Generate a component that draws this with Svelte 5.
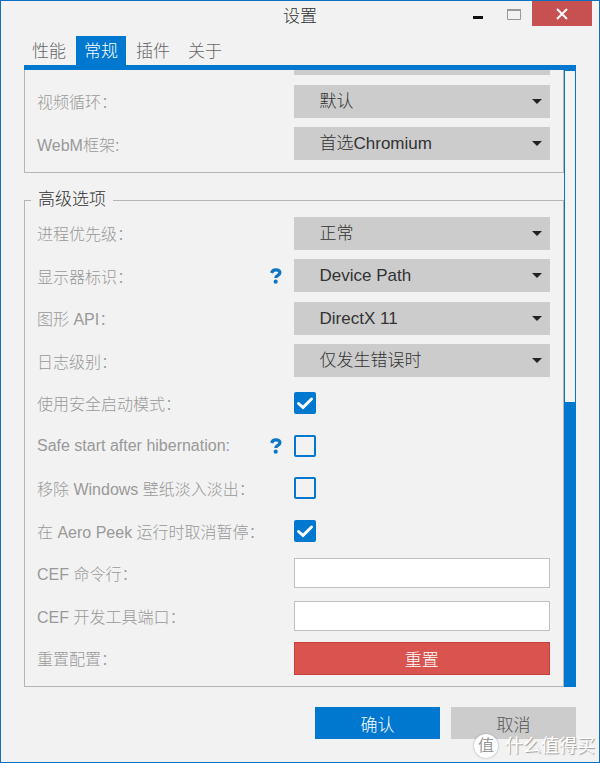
<script>
	let tabs = ['性能', '常规', '插件', '关于'];
	let activeTab = '常规';

	// General group, scrolled down so its first row is cut off
	let generalRows = [
		{ id: 'first', label: '', type: 'select', value: '' },
		{ id: 'video-loop', label: '视频循环：', type: 'select', value: '默认' },
		{ id: 'webm', label: 'WebM框架:', type: 'select', value: '首选Chromium' }
	];

	let advancedRows = [
		{ id: 'priority', label: '进程优先级：', type: 'select', value: '正常' },
		{ id: 'monitor', label: '显示器标识：', type: 'select', value: 'Device Path', help: true },
		{ id: 'graphics', label: '图形 API：', type: 'select', value: 'DirectX 11' },
		{ id: 'log', label: '日志级别：', type: 'select', value: '仅发生错误时' },
		{ id: 'safe-mode', label: '使用安全启动模式：', type: 'check', value: true },
		{ id: 'hibernation', label: 'Safe start after hibernation:', type: 'check', value: false, help: true },
		{ id: 'fade', label: '移除 Windows 壁纸淡入淡出：', type: 'check', value: false },
		{ id: 'peek', label: '在 Aero Peek 运行时取消暂停：', type: 'check', value: true },
		{ id: 'cef-cmd', label: 'CEF 命令行：', type: 'text', value: '' },
		{ id: 'cef-port', label: 'CEF 开发工具端口：', type: 'text', value: '' },
		{ id: 'reset', label: '重置配置：', type: 'reset', value: '重置' }
	];
</script>

{#snippet settingRow(row)}
	<div class="row">
		<label class="name" for={row.id}>{row.label}</label>
		{#if row.help}
			<button class="help" aria-label="Help">
				<svg width="12" height="16" viewBox="0 0 12 16">
					<path d="M1.600 5C2.200 2.700 3.700 1.900 5.800 1.900c2.500 0 4.100 1.100 4.100 2.900 0 2.700-4.100 2.400-4.100 5.200" fill="none" stroke="#0f76c4" stroke-width="3.200" />
					<circle cx="5.700" cy="13.700" r="2.100" fill="#0f76c4" />
				</svg>
			</button>
		{/if}
		<div class="control">
			{#if row.type === 'select'}
				<select id={row.id}>
					<option>{row.value}</option>
				</select>
				<svg class="caret" width="10" height="5" viewBox="0 0 10 5">
					<path d="M0 0h10L5 5z" fill="#222" />
				</svg>
			{:else if row.type === 'check'}
				<input type="checkbox" id={row.id} bind:checked={row.value} />
				<svg class="tick" width="22" height="22" viewBox="0 0 22 22">
					<path d="M4.500 11.500l4.500 4 8.500-8.500" fill="none" stroke="#fff" stroke-width="3" stroke-linecap="round" />
				</svg>
			{:else if row.type === 'text'}
				<input type="text" id={row.id} bind:value={row.value} />
			{:else}
				<button class="reset" id={row.id}>{row.value}</button>
			{/if}
		</div>
	</div>
{/snippet}

<main class="window">
	<header class="titlebar">
		<h1>设置</h1>
		<div class="window-buttons">
			<button aria-label="Minimize">
				<svg width="14" height="14" viewBox="0 0 14 14"><path d="M2 9h10v3H2z" fill="#111" /></svg>
			</button>
			<button aria-label="Maximize">
				<svg width="14" height="12" viewBox="0 0 14 12">
					<path d="M.5 1.500h13v10H.5z" fill="none" stroke="#999" />
					<path d="M0 1h14v2H0z" fill="#999" />
				</svg>
			</button>
			<button class="close" aria-label="Close">
				<svg width="12" height="12" viewBox="0 0 12 12">
					<path d="M1 1l10 10M11 1L1 11" stroke="#fff" stroke-width="2" />
				</svg>
			</button>
		</div>
	</header>

	<nav class="tabs">
		{#each tabs as tab}
			<button class:active={tab === activeTab}>{tab}</button>
		{/each}
	</nav>

	<div class="panel">
		<div class="content">
			<fieldset>
				{#each generalRows as row}
					{@render settingRow(row)}
				{/each}
			</fieldset>
			<fieldset class="advanced">
				<legend>高级选项</legend>
				{#each advancedRows as row}
					{@render settingRow(row)}
				{/each}
			</fieldset>
		</div>
		<div class="scrollbar">
			<div class="thumb"></div>
		</div>
	</div>

	<footer>
		<button class="ok">确认</button>
		<button class="cancel">取消</button>
	</footer>

	<div class="watermark">
		<span class="badge">值</span>
		<span>什么值得买</span>
	</div>
</main>

<style>
	:global(body) {
		margin: 0;
	}

	.window {
		position: relative;
		display: flex;
		flex-direction: column;
		box-sizing: border-box;
		height: 100vh;
		border: 1px solid #0a70c4;
		background: #f2f2f2;
		color: #333;
		font-family: 'Liberation Sans', 'Noto Sans CJK SC', sans-serif;
		font-size: 17px;
		font-weight: 300;
	}

	button,
	select,
	input {
		font: inherit;
		color: inherit;
		margin: 0;
		box-sizing: border-box;
	}

	button {
		padding: 0;
		border: none;
		background: none;
		cursor: pointer;
	}

	svg {
		display: block;
	}

	.titlebar {
		display: grid;
		grid-template-columns: 1fr auto 1fr;
		align-items: start;
		height: 35px;
	}

	h1 {
		grid-column: 2;
		margin: 0;
		font-size: 17px;
		font-weight: 300;
		line-height: 32px;
	}

	.window-buttons {
		display: flex;
		justify-content: flex-end;
		padding-right: 7px;
	}

	.window-buttons button {
		display: flex;
		align-items: center;
		justify-content: center;
		width: 36px;
		height: 25px;
	}

	.window-buttons .close {
		width: 60px;
		background: #c75050;
	}

	.tabs {
		display: flex;
		gap: 2px;
		margin: 0 23px;
		border-bottom: 5px solid #0078cf;
	}

	.tabs button {
		height: 29px;
		padding: 0 8px;
		color: #666;
		line-height: 32px;
	}

	.tabs .active {
		background: #0078cf;
		color: #fff;
	}

	.panel {
		display: flex;
		flex: 1;
		min-height: 0;
		margin: 0 23px;
	}

	.content {
		display: flex;
		flex: 1;
		flex-direction: column;
		justify-content: flex-end;
		overflow: hidden;
	}

	fieldset {
		flex: none;
		min-width: 0;
		margin: 0;
		padding: 0 13px 7px 12px;
		border: 1px solid #b5b5b5;
	}

	.advanced {
		margin-top: 15px;
	}

	legend {
		margin-left: -6px;
		padding: 0 7px;
		line-height: 24px;
	}

	.row {
		display: flex;
		align-items: center;
		height: 42px;
	}

	.row:nth-child(odd) {
		height: 43px;
	}

	.name {
		flex: 1;
		color: #999;
		font-size: 16px;
		white-space: nowrap;
	}

	.help {
		margin-right: 12px;
	}

	.control {
		position: relative;
		width: 50%;
	}

	select {
		display: block;
		appearance: none;
		width: 100%;
		height: 33px;
		padding: 0 26px;
		border: none;
		border-radius: 0;
		background: #ccc;
	}

	.caret {
		position: absolute;
		top: 14px;
		right: 8px;
		pointer-events: none;
	}

	input[type='checkbox'] {
		display: block;
		appearance: none;
		width: 22px;
		height: 22px;
		border: 2px solid #0078cf;
		border-radius: 2px;
	}

	input[type='checkbox']:checked {
		background: #0078cf;
	}

	.tick {
		position: absolute;
		top: 0;
		left: 0;
		visibility: hidden;
		pointer-events: none;
	}

	input:checked + .tick {
		visibility: visible;
	}

	input[type='text'] {
		display: block;
		width: 100%;
		height: 30px;
		padding: 0 8px;
		border: 1px solid #c0c0c0;
		background: #fff;
	}

	.reset {
		display: block;
		width: 100%;
		height: 33px;
		border: 1px solid #c93f3c;
		background: #d9534f;
		color: #fff;
	}

	.scrollbar {
		width: 12px;
		background: #0078cf;
	}

	.thumb {
		box-sizing: border-box;
		height: 54%;
		border: 1px solid #0078cf;
		background: #f4f4f4;
	}

	footer {
		display: flex;
		justify-content: flex-end;
		gap: 11px;
		padding: 20px 23px 23px;
	}

	footer button {
		width: 125px;
		height: 32px;
	}

	.ok {
		background: #0078cf;
		color: #fff;
	}

	.cancel {
		background: #ccc;
		color: #555;
	}

	.watermark {
		position: absolute;
		right: 4px;
		bottom: 4px;
		display: flex;
		align-items: center;
		gap: 7px;
		color: #fff;
		font-size: 18px;
		font-weight: 400;
		line-height: 24px;
		text-shadow: 1px 1px 1px #999;
		pointer-events: none;
	}

	.badge {
		width: 24px;
		border-radius: 50%;
		background: #fff;
		box-shadow: 0 0 2px #999;
		color: #999;
		font-size: 16px;
		text-align: center;
		text-shadow: none;
	}
</style>
